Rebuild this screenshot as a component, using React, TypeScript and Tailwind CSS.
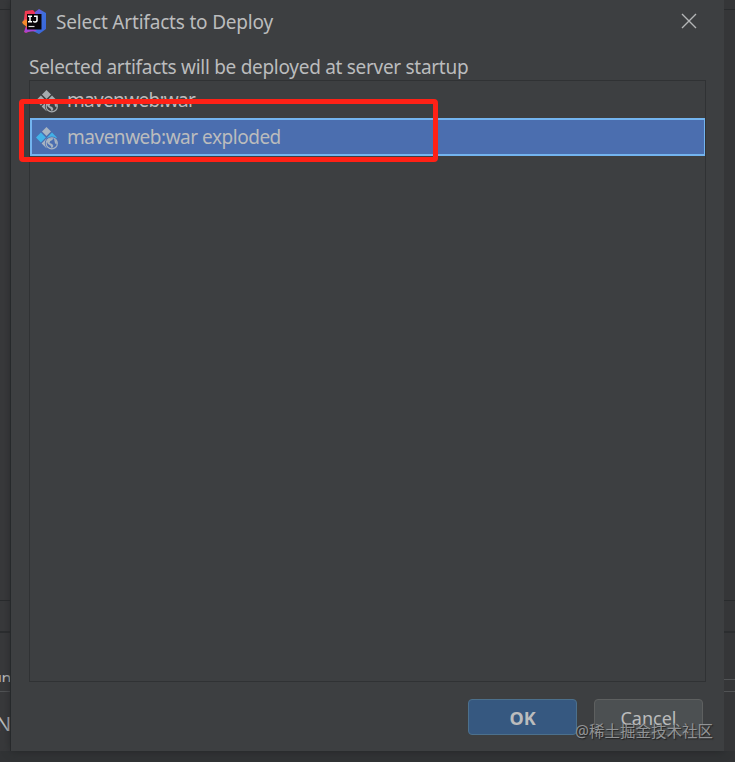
function IdeLogo() {
  return (
    <svg className="h-[25px] w-[26px] shrink-0" viewBox="0 0 26 25">
      <defs>
        <linearGradient id="pink" x1="0" y1="1" x2="1" y2="0">
          <stop offset="0" stopColor="#c437c8" />
          <stop offset=".45" stopColor="#f0404f" />
          <stop offset="1" stopColor="#ee2960" />
        </linearGradient>
        <linearGradient id="blue" x1="0" y1="0" x2="1" y2="1">
          <stop offset="0" stopColor="#8b4bd8" />
          <stop offset=".5" stopColor="#3d6fdd" />
          <stop offset="1" stopColor="#3a62d8" />
        </linearGradient>
      </defs>
      <path d="M3 2 11 1l5 6-3 13-9 4-2-1 2-6-3-4 1-3z" fill="url(#pink)" />
      <path d="m0 13 4-3 2 3-1 5-4-3z" fill="#f48a2c" />
      <path d="m13 3 4-3 7 4v16l-7 5-6-3z" fill="url(#blue)" />
      <path d="m3 20 8-1 4 3-12 1z" fill="#a246d6" />
      <path d="M5 5h14.5v15.5H5z" fill="#080409" />
      <path d="M6 7.2h4M8 7v6M6 12.8h4M12 7.2h3v4.1q0 1.7-2 1.7-1 0-1.8-.8" fill="none" stroke="#fff" strokeWidth="1.5" />
      <path d="M6.5 17.5h6" stroke="#d8d8d8" strokeWidth="1.2" />
    </svg>
  );
}

function ArtifactIcon({ exploded = false }: { exploded?: boolean }) {
  const edge = exploded ? "#4c6eb0" : "#3d3f41";
  const ink = exploded ? "#a8b4c2" : "#a5abae";
  return (
    <svg className="relative top-px h-6 w-6 shrink-0" viewBox="0 0 24 24">
      <path d="m10.5 1 4.5 4.5-4.5 4.5-4.5-4.5z" fill={ink} />
      <path d="m4.9 6.6 4.9 4.9-4.9 4.9-4.9-4.9z" fill={exploded ? "#42b2e8" : ink} />
      <path d="m16 6.6 4.9 4.9-4.9 4.9-4.9-4.9z" fill={exploded ? "#42b2e8" : ink} />
      <path d="m10.5 12.5 4.9 4.9-4.9 4.9-4.9-4.9z" fill={ink} />
      <circle cx="15.8" cy="17.3" r="6.9" fill={edge} />
      <circle cx="15.8" cy="17.3" r="5.6" fill={edge} stroke={ink} strokeWidth="1.1" />
      <path d="m10.6 15 2.2-2.5 4.2-.6-.5 2-2.2 1.2-.8 2 2.7.8 1.2 2-1.6 2.5-1.2-2.7-2.8-2z" fill={ink} />
      <path d="m18 12.4 3 3-.4 3-1.6-1.2z" fill={ink} />
    </svg>
  );
}

function RightRules() {
  return (
    <div className="flex flex-1 flex-col bg-[#353638]">
      <div className="h-[10px] border-b border-[#292b2d]" />
      <div className="h-[591px] border-b border-[#292b2d]" />
      <div className="h-[32px] border-b-2 border-[#2b2d2f]" />
      <div className="h-[47px] border-b border-[#515355]" />
      <div className="h-[12px] border-b border-[#515355]" />
    </div>
  );
}

export default function App() {
  return (
    <main className="relative flex h-[762px] w-[735px] flex-col overflow-hidden bg-[#313335] font-['Noto_Sans','Noto_Sans_CJK_SC',sans-serif] text-[#bbbcbd]">
      <div className="flex h-[751px]">
        <div className="flex w-[11px] shrink-0 flex-col overflow-hidden border-r border-[#2a2c2e] bg-[#38393b]">
          <div className="h-[10px] border-b border-[#292b2d]" />
          <div className="h-[591px] border-b border-[#292b2d]" />
          <div className="h-[32px] border-b-2 border-[#2b2d2f]" />
          <div className="flex h-[59px] items-end border-b border-[#515355] pb-[9px]">
            <span className="-ml-[8px] block h-[8px] overflow-hidden text-[16px] leading-[8px] tracking-[-0.5px]">un</span>
          </div>
          <div className="-ml-[4px] pt-[20px] text-[20px] leading-6">N</div>
        </div>
        <section className="flex w-[713px] shrink-0 flex-col bg-[#3d3f41] shadow-[0_0_8px_#242628]">
          <header className="flex h-[45px] items-center pl-[11px] pr-[27px] pb-[3px]">
            <IdeLogo />
            <h1 className="ml-[8px] pt-[2px] text-[19px] leading-6 tracking-[-0.19px] whitespace-nowrap">Select Artifacts to Deploy</h1>
            <svg className="ml-auto h-4 w-4" viewBox="0 0 16 16"><path d="m1 1 14 14M15 1 1 15" stroke="#b4b6b7" strokeWidth="1.4" /></svg>
          </header>
          <p className="ml-[18px] h-[35px] pt-[10px] text-[19px] leading-6 tracking-[-0.29px] whitespace-nowrap">Selected artifacts will be deployed at server startup</p>
          <div className="ml-[18px] h-[602px] w-[677px] border border-[#303234]">
            <div className="flex h-[37px] items-center pl-[6px]">
              <ArtifactIcon />
              <span className="ml-[7px] pt-px text-[19px] leading-6 tracking-[-0.68px]">mavenweb:war</span>
            </div>
            <div className="flex h-[38px] items-center border-2 border-r border-[#73b4ef] bg-[#4b6eaf] pl-[4px]">
              <ArtifactIcon exploded />
              <span className="ml-[7px] text-[19px] leading-6 tracking-[-0.48px]">mavenweb:war exploded</span>
            </div>
          </div>
          <footer className="flex gap-[17px] pl-[457px] pt-[17px]">
            <button className="h-[36px] w-[109px] rounded-[4px] border border-[#4c708c] bg-[#365880] pt-px text-[18px] font-bold leading-6">OK</button>
            <button className="h-[36px] w-[109px] rounded-[4px] border border-[#5e6060] bg-[#4c5052] pt-px text-[18px] leading-6">Cancel</button>
          </footer>
        </section>
        <RightRules />
      </div>
      <div className="absolute left-[19px] top-[99px] h-[63px] w-[419px] rounded-[4px] border-[5px] border-[#ff2116]" />
      <div className="absolute left-[575px] top-[721px] text-[15.5px] leading-5 whitespace-nowrap text-[#929496] [text-shadow:1px_1px_1px_#222]">@稀土掘金技术社区</div>
    </main>
  );
}
